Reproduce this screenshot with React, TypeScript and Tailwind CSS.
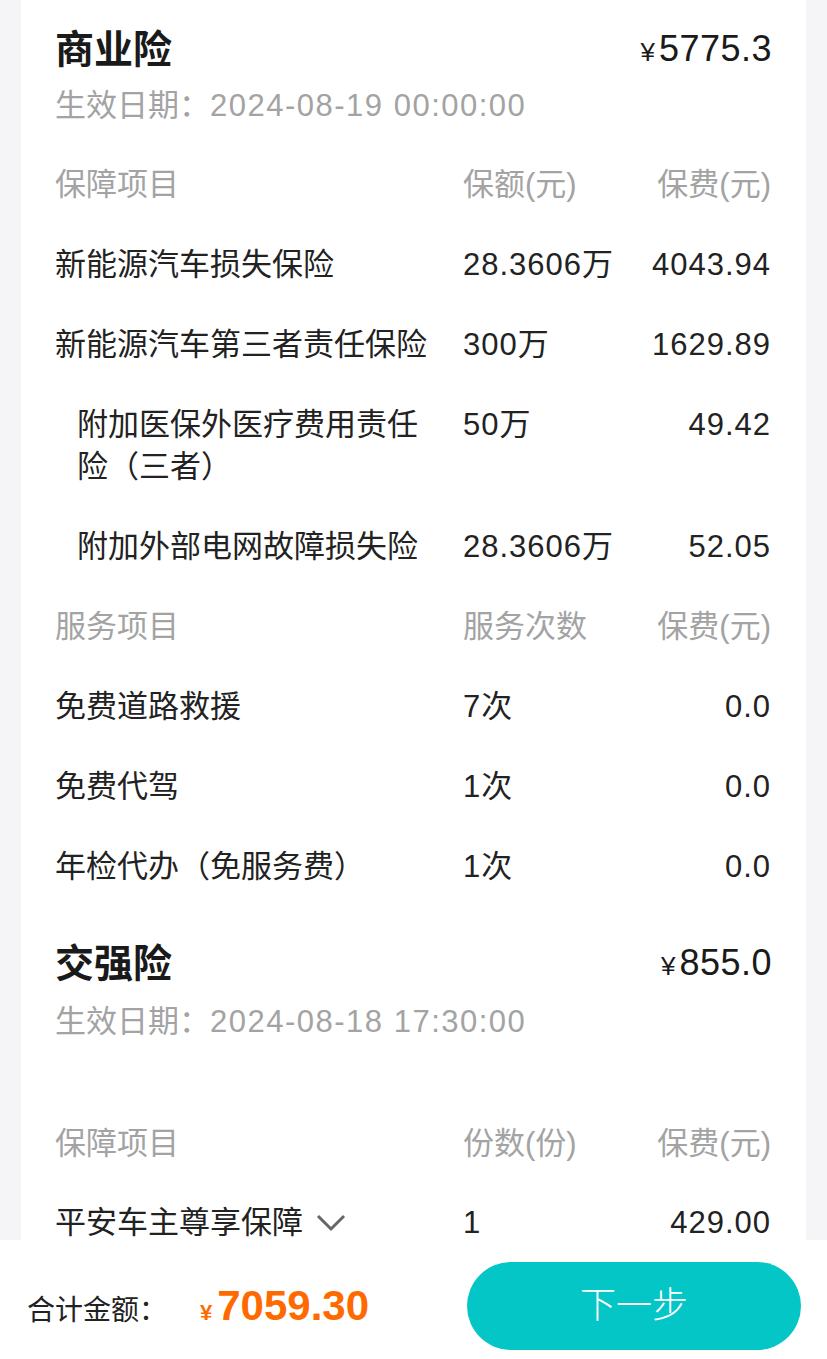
import { Fragment } from "react";

type Row = {
  name: string;
  amount: string;
  fee: string;
  sub?: boolean;
  chevron?: boolean;
};

const bizRows: Row[] = [
  { name: "新能源汽车损失保险", amount: "28.3606万", fee: "4043.94" },
  { name: "新能源汽车第三者责任保险", amount: "300万", fee: "1629.89" },
  { name: "附加医保外医疗费用责任险（三者）", amount: "50万", fee: "49.42", sub: true },
  { name: "附加外部电网故障损失险", amount: "28.3606万", fee: "52.05", sub: true },
];

const serviceRows: Row[] = [
  { name: "免费道路救援", amount: "7次", fee: "0.0" },
  { name: "免费代驾", amount: "1次", fee: "0.0" },
  { name: "年检代办（免服务费）", amount: "1次", fee: "0.0" },
];

const font = "font-['Liberation_Sans','Noto_Sans_CJK_SC',sans-serif]";

function Header({ cols }: { cols: [string, string, string] }) {
  return (
    <>
      <div className="text-[#a3a3a3]">{cols[0]}</div>
      <div className="text-[#a3a3a3] whitespace-nowrap">{cols[1]}</div>
      <div className="text-[#a3a3a3] text-right whitespace-nowrap">{cols[2]}</div>
    </>
  );
}

function Rows({ rows }: { rows: Row[] }) {
  return (
    <>
      {rows.map((r) => (
        <Fragment key={r.name}>
          <div className={`flex items-center ${r.sub ? "pl-[22px]" : ""}`}>
            <span>{r.name}</span>
            {r.chevron && (
              <svg width="30" height="20" viewBox="0 0 30 20" className="ml-[13px]">
                <path d="M2 3 L15 16 L28 3" fill="none" stroke="#666" strokeWidth="3" />
              </svg>
            )}
          </div>
          <div className="whitespace-nowrap tracking-[1px]">{r.amount}</div>
          <div className="text-right whitespace-nowrap tracking-[1px]">{r.fee}</div>
        </Fragment>
      ))}
    </>
  );
}

function Title({ name, price }: { name: string; price: string }) {
  return (
    <div className="flex items-center justify-between h-[56px]">
      <div className="text-[39px] font-bold text-[#1a1a1a]">{name}</div>
      <div className="flex items-baseline text-[#1a1a1a] font-medium">
        <span className="text-[26px] mr-[4px]">¥</span>
        <span className="text-[36px] tracking-[0.5px]">{price}</span>
      </div>
    </div>
  );
}

export default function App() {
  return (
    <div className={`relative h-[1359px] overflow-hidden bg-[#f5f5f7] ${font}`}>
      <div className="mx-[21px] bg-white px-[34px] pt-[22px] pb-[140px] text-[31px] leading-[42px] text-[#222]">
        <Title name="商业险" price="5775.3" />
        <div className="mt-[7px] text-[#a3a3a3]">
          生效日期：<span className="tracking-[1.5px]">2024-08-19 00:00:00</span>
        </div>

        <div className="mt-[37px] grid grid-cols-[385px_155px_130px] gap-x-[23px] gap-y-[38px]">
          <Header cols={["保障项目", "保额(元)", "保费(元)"]} />
          <Rows rows={bizRows} />
          <Header cols={["服务项目", "服务次数", "保费(元)"]} />
          <Rows rows={serviceRows} />
        </div>

        <div className="mt-[48px]">
          <Title name="交强险" price="855.0" />
        </div>
        <div className="mt-[9px] text-[#a3a3a3]">
          生效日期：<span className="tracking-[1.5px]">2024-08-18 17:30:00</span>
        </div>

        <div className="mt-[80px] grid grid-cols-[385px_155px_130px] gap-x-[23px] gap-y-[37px]">
          <Header cols={["保障项目", "份数(份)", "保费(元)"]} />
          <Rows rows={[{ name: "平安车主尊享保障", amount: "1", fee: "429.00", chevron: true }]} />
        </div>
      </div>

      <div className="absolute bottom-0 left-0 right-0 h-[119px] bg-white flex items-center pt-[12px] pl-[27px] pr-[26px]">
        <div className="text-[28px] text-[#222] mt-[11px]">合计金额：</div>
        <div className="ml-[33px] flex items-baseline text-[#ff6a00] font-bold">
          <span className="text-[22px] mr-[5px]">¥</span>
          <span className="text-[42px]">7059.30</span>
        </div>
        <button className="ml-auto h-[88px] w-[334px] rounded-full bg-[#04c6c7] text-white text-[36px] font-light">
          下一步
        </button>
      </div>
    </div>
  );
}
